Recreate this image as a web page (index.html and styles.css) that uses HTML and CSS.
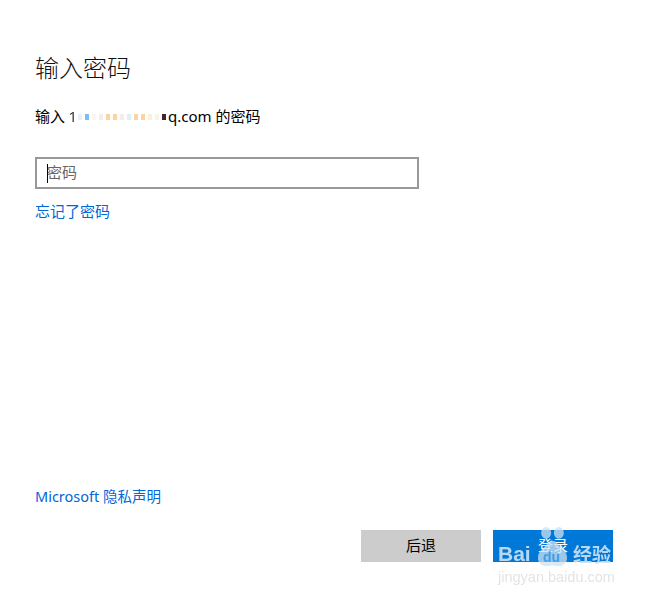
FILE: index.html
```html
<!DOCTYPE html>
<html lang="zh-CN">
<head>
<meta charset="utf-8">
<title>输入密码</title>
<link rel="stylesheet" href="styles.css">
</head>
<body>
<main class="dialog">
  <h1 class="title">输入密码</h1>
  <p class="sub">输入 <span class="one">1</span><span class="mosaic"><i class="m c1"></i><i class="m c2"></i><i class="m c0"></i><i class="m c3"></i><i class="m c4"></i><i class="m c4"></i><i class="m c3"></i><i class="m c5"></i><i class="m c4"></i><i class="m c4"></i><i class="m c6"></i><i class="m c7"></i><i class="m c8"></i></span><span class="tail">q.com 的密码</span></p>
  <div class="field"><span class="caret"></span><span class="placeholder">密码</span></div>
  <a class="link forgot" href="#">忘记了密码</a>
  <div class="spacer"></div>
  <a class="link privacy" href="#">Microsoft 隐私声明</a>
  <div class="actions">
    <button class="btn back">后退</button>
    <button class="btn login">登录</button>
  </div>
</main>
<div class="watermark">
  <div class="wm-top">
    <span class="wm-bai">Bai</span>
    <span class="wm-paw">
      <svg width="31" height="40" viewBox="0 0 34 44"><ellipse cx="10" cy="6.500" rx="5.500" ry="6.500"/><ellipse cx="24" cy="6.500" rx="5.500" ry="6.500"/><path d="M17 15c-4 0-6 4-9 7-3 3-7 6-7 12 0 5 4 9 9 9 3 0 5-1 7-1s4 1 7 1c5 0 9-4 9-9 0-6-4-9-7-12-3-3-5-7-9-7z"/></svg>
      <span class="wm-du">du</span>
    </span>
    <span class="wm-cn">经验</span>
  </div>
  <div class="wm-url">jingyan.baidu.com</div>
</div>
</body>
</html>
```
FILE: styles.css
```css
html, body {
  margin: 0;
  padding: 0;
  background: #fff;
}
body {
  position: relative;
  width: 649px;
  height: 598px;
  overflow: hidden;
  font-family: "Noto Sans CJK SC", "Liberation Sans", sans-serif;
}
.dialog {
  box-sizing: border-box;
  height: 598px;
  padding: 51px 36px 36px 35px;
  display: flex;
  flex-direction: column;
  align-items: flex-start;
}
.title {
  margin: 0;
  font-size: 24px;
  line-height: 32px;
  font-weight: 300;
  color: #111;
}
.sub {
  margin: 23px 0 0;
  font-size: 15px;
  line-height: 20px;
  color: #000;
  display: flex;
  align-items: center;
  white-space: pre;
  font-family: "Noto Sans CJK SC", sans-serif;
}
.one {
  font-family: "Noto Sans", sans-serif;
  opacity: .8;
}
.mosaic {
  display: inline-flex;
  gap: 3px;
  width: 90px;
  margin-left: 1px;
  padding-top: 1px;
}
.m {
  display: block;
  width: 4px;
  height: 6px;
  background: #fff;
}
.c1 { background: #e8f0fa; }
.c2 { background: #7fbcf5; }
.c3 { background: #f3eee8; }
.c4 { background: #fbd3a4; }
.c5 { background: #d9f3f5; }
.c6 { background: #fdf0d8; }
.c7 { background: #f6f6e6; }
.c8 { background: #4a1f2e; }
.c0 { background: #f8f5f2; }
.tail {
  font-family: "Noto Sans", "Noto Sans CJK SC", sans-serif;
}
.field {
  box-sizing: border-box;
  margin-top: 31px;
  width: 384px;
  height: 32px;
  border: 2px solid #999;
  padding-left: 10px;
  display: flex;
  align-items: center;
  background: #fff;
}
.caret {
  width: 1px;
  height: 19px;
  background: #000;
}
.placeholder {
  font-size: 15px;
  line-height: 20px;
  color: #666;
  margin-left: -1px;
  margin-bottom: 2px;
}
.link {
  color: #0067d6;
  text-decoration: none;
  font-size: 15px;
  line-height: 20px;
}
.forgot {
  margin-top: 12px;
}
.spacer {
  flex: 1;
}
.privacy {
  font-family: "Noto Sans", "Noto Sans CJK SC", sans-serif;
  font-size: 14.500px;
}
.actions {
  margin-top: 24px;
  align-self: flex-end;
  display: flex;
  gap: 12px;
}
.btn {
  width: 120px;
  height: 32px;
  border: 0;
  padding: 0 0 2px;
  font: inherit;
  font-size: 15px;
  line-height: 20px;
}
.back {
  background: #cccccc;
  color: #000;
}
.login {
  background: #0078d7;
  color: #fff;
}
.watermark {
  position: absolute;
  left: 498px;
  top: 527px;
  width: 116px;
  color: rgba(205, 225, 243, .9);
  filter: blur(.4px);
}
.wm-top {
  display: flex;
  align-items: flex-end;
  height: 40px;
}
.wm-bai {
  width: 39px;
  font-family: "Liberation Sans", sans-serif;
  font-weight: 700;
  font-size: 21px;
  line-height: 24px;
  margin-bottom: 1px;
}
.wm-paw {
  position: relative;
  width: 31px;
  height: 40px;
}
.wm-paw svg {
  display: block;
  fill: rgba(205, 225, 243, .75);
}
.wm-du {
  position: absolute;
  left: 6px;
  top: 22px;
  font-family: "Liberation Sans", sans-serif;
  font-weight: 700;
  font-size: 14px;
  line-height: 16px;
  color: rgba(0, 120, 215, .55);
}
.wm-cn {
  margin-left: 5px;
  margin-bottom: 1px;
  font-size: 19px;
  line-height: 24px;
  font-weight: 700;
  white-space: nowrap;
}
.wm-url {
  margin-top: 3px;
  font-family: "Liberation Sans", sans-serif;
  font-size: 14.500px;
  line-height: 15px;
  white-space: nowrap;
  color: #e4e4e4;
  font-weight: 400;
}
```
